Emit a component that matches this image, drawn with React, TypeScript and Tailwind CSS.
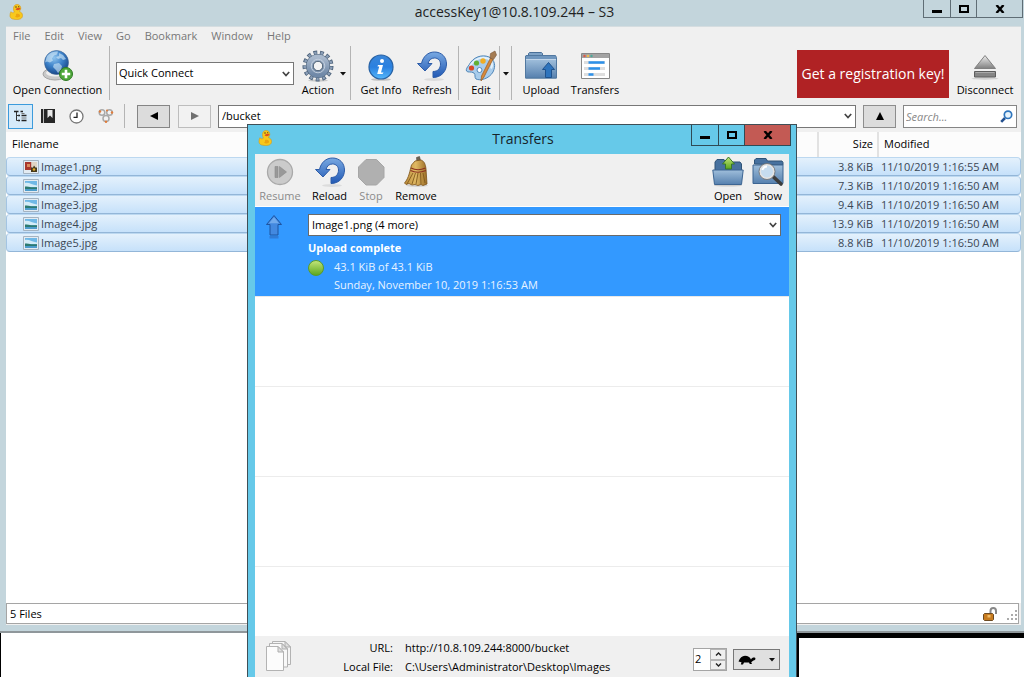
import React, { useState } from 'react';

interface RemoteFile {
  name: string;
  size: string;
  modified: string;
  kind: 'png' | 'jpg';
}

const files: RemoteFile[] = [
  { name: 'Image1.png', size: '3.8 KiB', modified: '11/10/2019 1:16:55 AM', kind: 'png' },
  { name: 'Image2.jpg', size: '7.3 KiB', modified: '11/10/2019 1:16:50 AM', kind: 'jpg' },
  { name: 'Image3.jpg', size: '9.4 KiB', modified: '11/10/2019 1:16:50 AM', kind: 'jpg' },
  { name: 'Image4.jpg', size: '13.9 KiB', modified: '11/10/2019 1:16:50 AM', kind: 'jpg' },
  { name: 'Image5.jpg', size: '8.8 KiB', modified: '11/10/2019 1:16:50 AM', kind: 'jpg' },
];

const menus = ['File', 'Edit', 'View', 'Go', 'Bookmark', 'Window', 'Help'];

/* ---------- icons ---------- */

function Gradients() {
  return (
    <svg width="0" height="0" className="absolute" aria-hidden="true">
      <defs>
        <radialGradient id="globe" cx="0.4" cy="0.3" r="0.75">
          <stop offset="0" stopColor="#8fc4ee" />
          <stop offset="0.5" stopColor="#3b80c8" />
          <stop offset="1" stopColor="#143f80" />
        </radialGradient>
        <linearGradient id="info" x1="0" y1="0" x2="0" y2="1">
          <stop offset="0" stopColor="#3b86d8" />
          <stop offset="0.5" stopColor="#2a80e0" />
          <stop offset="1" stopColor="#55b8fb" />
        </linearGradient>
        <linearGradient id="arrow" x1="0" y1="0" x2="0" y2="1">
          <stop offset="0" stopColor="#79a9e2" />
          <stop offset="1" stopColor="#2259b4" />
        </linearGradient>
        <linearGradient id="folder" x1="0" y1="0" x2="0" y2="1">
          <stop offset="0" stopColor="#9fbedb" />
          <stop offset="1" stopColor="#5680ae" />
        </linearGradient>
        <linearGradient id="gear" x1="0" y1="0" x2="0" y2="1">
          <stop offset="0" stopColor="#a9b9cd" />
          <stop offset="1" stopColor="#7089a8" />
        </linearGradient>
        <linearGradient id="metal" x1="0" y1="0" x2="0" y2="1">
          <stop offset="0" stopColor="#eeeeee" />
          <stop offset="1" stopColor="#808080" />
        </linearGradient>
        <linearGradient id="green" x1="0" y1="0" x2="0" y2="1">
          <stop offset="0" stopColor="#c4e67a" />
          <stop offset="1" stopColor="#5aa51c" />
        </linearGradient>
        <linearGradient id="straw" x1="0" y1="0" x2="1" y2="0">
          <stop offset="0" stopColor="#b98a3a" />
          <stop offset="0.5" stopColor="#e0b964" />
          <stop offset="1" stopColor="#9a6c26" />
        </linearGradient>
      </defs>
    </svg>
  );
}

function DuckIcon() {
  return (
    <svg width="16" height="16" viewBox="0 0 16 16" aria-hidden="true">
      <path d="M4.500 4.500C4.500 2 6 .5 8 .5c2.300 0 3.800 1.500 3.800 3.600 0 1.600-.8 2.600-1.800 3.300 2 .6 3.500 1.700 3.500 4.100 0 2.900-2.300 4-6 4-3.900 0-6.500-1-6.500-3.900 0-1.600.4-3 1-3.900.8 1.300 2 1.400 3.300.5-.5-1-.8-2.300-.8-3.700z" fill="#f8c81c" stroke="#d89a10" strokeWidth=".6" />
      <path d="M7 10c2.500-.8 4.300.2 4 2-.5 1.700-3.500 1.900-5 .7 1-.6 1.200-1.500 1-2.700z" fill="#eda50f" />
      <path d="M6.500 5.200c.8-1 2-1.700 4-1.500 1.200.3 1.200 1.300.2 1.900-1.200.7-3 .9-4.200-.4z" fill="#e0521c" />
      <circle cx="7" cy="3" r=".8" fill="#5b4413" />
      <circle cx="9.700" cy="2.700" r=".6" fill="#5b4413" />
    </svg>
  );
}

function ConnectIcon() {
  return (
    <svg width="32" height="32" viewBox="0 0 32 32" aria-hidden="true">
      <ellipse cx="13" cy="24" rx="12" ry="6" fill="#c9c9c9" stroke="#a4a4a4" />
      <ellipse cx="13" cy="23" rx="9" ry="3.500" fill="#efefef" />
      <circle cx="14.500" cy="12.500" r="12" fill="url(#globe)" stroke="#3c628f" strokeWidth=".6" />
      <path d="M5 6c3-4 8-5 11-4.500l-1 3-3 1-2 3 1 2-3 2-3-1-2 1zM17 3l4 2 3 4-3 1-2-2-3 1-2-2 3-1zM12 14l5-1 3 3-1 4-3 3-2-3-3-3z" fill="#d6ebf8" opacity=".6" />
      <circle cx="24" cy="24" r="6.500" fill="#4fa83a" stroke="#2d7a22" />
      <path d="M24 19.800v8.400M19.800 24h8.400" stroke="#fff" strokeWidth="2.600" />
    </svg>
  );
}

function GearIcon() {
  return (
    <svg width="32" height="32" viewBox="0 0 32 32" aria-hidden="true">
      <ellipse cx="16" cy="30.500" rx="10" ry="1.200" fill="#c9c9c9" />
      <circle cx="16" cy="16" r="13" fill="none" stroke="#4f647c" strokeWidth="5" strokeDasharray="3.600 2.681" />
      <circle cx="16" cy="16" r="12.800" fill="none" stroke="#8b9fb8" strokeWidth="3.600" strokeDasharray="2.200 3.984" strokeDashoffset="-.7" />
      <circle cx="16" cy="16" r="8.300" fill="none" stroke="#4f647c" strokeWidth="7.600" />
      <circle cx="16" cy="16" r="8.300" fill="none" stroke="url(#gear)" strokeWidth="6.400" />
      <circle cx="16" cy="16" r="6.800" fill="none" stroke="#c2cedd" strokeWidth="1" />
      <circle cx="16" cy="16" r="4.700" fill="#f3f3f3" stroke="#4f6378" strokeWidth="1" />
    </svg>
  );
}

function InfoIcon() {
  return (
    <svg width="32" height="32" viewBox="0 0 32 32" aria-hidden="true">
      <ellipse cx="16" cy="29.500" rx="10" ry="1.300" fill="#c2c2c2" />
      <circle cx="16" cy="17" r="12" fill="url(#info)" stroke="#2862a4" strokeWidth="1.200" />
      <circle cx="17" cy="11" r="2" fill="#fff" />
      <path d="M13 15h5l-2 7.500h2.500L17.500 24h-5.300l2-7.500H12.500z" fill="#fff" />
    </svg>
  );
}

function RefreshIcon() {
  return (
    <svg width="32" height="32" viewBox="0 0 32 32" aria-hidden="true">
      <ellipse cx="18" cy="29.500" rx="10" ry="1.500" fill="#dcdcdc" />
      <path d="M5.500 13.500C7 6.500 12 2 18.500 2 25.500 2 30.500 7 30.500 14S25.500 27.500 17 27.500v-6c5 0 7.500-3.200 7.500-7.500 0-3.500-2.500-6-6-6-3.500 0-5.500 2-6.500 5.500h4L9 21 1.500 13.500z" fill="url(#arrow)" stroke="#2d5ca8" strokeWidth="1" />
    </svg>
  );
}

function EditIcon() {
  return (
    <svg width="32" height="32" viewBox="0 0 32 32" aria-hidden="true">
      <path d="M4 15C8 7 17 4 24 7c6 3 7 9 4 15-4 7-13 9-17 7-2-2 0-4-2-6-3-2-6 0-7.500-2-.8-1.500.7-4 2.500-6z" fill="#a9cdec" stroke="#5287b8" />
      <path d="M5 16c4-7 11-9.500 18-7.500 4 2 5 6 3 10" fill="none" stroke="#e3f1fb" strokeWidth="2" />
      <circle cx="6.500" cy="18" r="2.600" fill="#d8482a" />
      <circle cx="11.500" cy="13" r="2.600" fill="#62b033" />
      <circle cx="18" cy="11" r="2.700" fill="#f0ad24" />
      <circle cx="14.500" cy="20" r="2.500" fill="#fff" stroke="#5287b8" />
      <path d="M25.500 8l2.300 1.500L19 27l-3 4 .5-5z" fill="#d88a3c" stroke="#985a1e" strokeWidth=".7" />
      <path d="M25 8l.5-4.500L30 1l1.500 4-3 4.500z" fill="#a47b52" stroke="#79573a" strokeWidth=".6" />
    </svg>
  );
}

function UploadFolderIcon() {
  return (
    <svg width="32" height="32" viewBox="0 0 32 32" aria-hidden="true">
      <path d="M3.500 7V3.500l1-1h12l1 1V7z" fill="#7fa3c7" stroke="#496f98" />
      <path d="M1 5.500h29.500l1 2v20.500H.5V6z" fill="#6f96be" stroke="#5178a0" />
      <path d="M.5 9.500h31v18.500H.5z" fill="url(#folder)" stroke="#5178a0" />
      <path d="M1 9.500h30" stroke="#c2d6ea" />
      <path d="M23.500 12.500l6 7h-3v8h-6v-8h-3z" fill="#2e74bd" stroke="#1f528d" />
    </svg>
  );
}

function TransfersIcon() {
  return (
    <svg width="32" height="32" viewBox="0 0 32 32" aria-hidden="true">
      <path d="M2.500 3.500h28v25h-28z" fill="#fff" stroke="#878787" />
      <path d="M3 4h27v4H3z" fill="#a3a3a3" />
      <circle cx="5.500" cy="6" r="1.200" fill="#df5946" />
      <circle cx="9" cy="6" r="1.200" fill="#eebb4c" />
      <circle cx="12.500" cy="6" r="1.200" fill="#4ca99a" />
      <path d="M5 12.500h3M5 18.500h3M5 24.500h3M8 12.500h18M8 18.500h18M8 24.500h18" stroke="#dedede" strokeWidth="3" />
      <path d="M9.500 12.500h16M9.500 18.500H21M9.500 24.500h5" stroke="#2d91ea" strokeWidth="2.600" />
    </svg>
  );
}

function EjectIcon() {
  return (
    <svg width="32" height="32" viewBox="0 0 32 32" aria-hidden="true">
      <ellipse cx="16" cy="28.500" rx="13.500" ry="1.200" fill="#d0d0d0" />
      <path d="M16 5.500l10.500 13h-21z" fill="url(#metal)" stroke="#808080" />
      <path d="M5.500 21.500h21v5.500h-21z" fill="#858585" stroke="#5c5c5c" />
      <path d="M6.500 22.500h19" stroke="#aaa" />
    </svg>
  );
}

function ResumeIcon() {
  return (
    <svg width="32" height="32" viewBox="0 0 32 32" aria-hidden="true">
      <circle cx="16" cy="16" r="12.500" fill="#cbcbcb" stroke="#a9a9a9" strokeWidth="1.300" />
      <path d="M11 10.500h3v11h-3zM15.500 10.500l7 5.500-7 5.500z" fill="#999" stroke="#8a8a8a" strokeWidth=".6" />
    </svg>
  );
}

function StopIcon() {
  return (
    <svg width="32" height="32" viewBox="0 0 32 32" aria-hidden="true">
      <path d="M11 3.500h10.500l7.500 7.500v10.500L21.500 29H11l-7.500-7.500V11z" fill="#b0b0b0" stroke="#a6a6a6" />
    </svg>
  );
}

function BroomIcon() {
  return (
    <svg width="32" height="32" viewBox="0 0 32 32" aria-hidden="true">
      <ellipse cx="17" cy="29.500" rx="11" ry="1.500" fill="#d2d2d2" />
      <path d="M16.500 1.500l3-1 1.500 6h-4z" fill="#6f6455" stroke="#4d4338" strokeWidth=".6" />
      <path d="M15 5l6-1c3 1 4.500 4 5 9l1 15-4 1.500-2-1-3 1-3-1-3 .5-3-1.500-3 1-1.500-1.500C9 22 10 14 11.500 9z" fill="url(#straw)" stroke="#7c5218" strokeWidth=".8" />
      <path d="M11 12c4 2 10 2 14.500 0M10.500 14.500c4 2 10.500 2 15.500 0" fill="none" stroke="#8a2f20" strokeWidth="1.100" />
      <path d="M13 17L7 28M15.500 17L12 28M18 17l-2 11M20.500 17l.5 11M23 17l2 10" stroke="#815a1d" strokeWidth=".9" />
    </svg>
  );
}

function OpenFolderIcon() {
  return (
    <svg width="32" height="32" viewBox="0 0 32 32" aria-hidden="true">
      <ellipse cx="16" cy="29.500" rx="14" ry="1" fill="#ccc" />
      <path d="M3 15V6l2-2.500h7L13.500 6H28l1.500 2v7z" fill="#47719f" stroke="#2f5377" />
      <path d="M.8 14h30.400l-1.700 14.500h-27z" fill="url(#folder)" stroke="#3d6592" />
      <path d="M16.500 1l6 7h-3v5h-6V8h-3z" fill="url(#green)" stroke="#37772a" />
    </svg>
  );
}

function ShowFolderIcon() {
  return (
    <svg width="32" height="32" viewBox="0 0 32 32" aria-hidden="true">
      <path d="M2.500 8V4l1.500-1.500h10L15.500 5H30l1 1.500V9z" fill="#47719f" stroke="#2f5377" />
      <path d="M1 9h30v18.500H1z" fill="url(#folder)" stroke="#3d6592" />
      <path d="M20.500 20l8.500 8" stroke="#3c3c3c" strokeWidth="3.600" strokeLinecap="round" />
      <circle cx="15" cy="15.500" r="7" fill="#c6dcef" stroke="#e4e4e4" strokeWidth="2" />
      <circle cx="15" cy="15.500" r="8" fill="none" stroke="#6b6b6b" strokeWidth=".8" />
      <path d="M10.500 14c.5-2 2.500-3.500 4.500-3.500" fill="none" stroke="#fff" strokeWidth="1.800" />
    </svg>
  );
}

function UpArrowIcon() {
  return (
    <svg width="18" height="26" viewBox="0 0 18 26" aria-hidden="true">
      <path d="M9 1.500l7.500 9H13V21H5V10.500H1.500z" fill="#4389e0" stroke="#1e54a0" />
      <path d="M9 3.300l5 6H4z" fill="#8fbff5" opacity=".6" />
      <path d="M4.500 22h9v2.500h-9z" fill="#2f6fc4" opacity=".7" />
    </svg>
  );
}

function PagesIcon() {
  return (
    <svg width="28" height="32" viewBox="0 0 28 32" aria-hidden="true">
      <path d="M7.500 1.500H20l5.500 5.500v17.500h-18z" fill="#f5f5f5" stroke="#b3b3b3" />
      <path d="M4.500 3.500H17l5.500 5.500v18h-18z" fill="#f8f8f8" stroke="#b3b3b3" />
      <path d="M1.500 6.500H13l5.500 5.500v18.500h-17z" fill="#fcfcfc" stroke="#b3b3b3" />
      <path d="M13 6.500V12h5.500zM17 3.500v5.500h5.500zM20 1.500V7h5.500z" fill="#e0e0e0" stroke="#adadad" />
    </svg>
  );
}

function FileIcon({ kind }: { kind: RemoteFile['kind'] }) {
  return (
    <svg width="16" height="14" viewBox="0 0 16 14" aria-hidden="true" className="shrink-0">
      <path d="M.5.5h15v13H.5z" fill="#e3ebf2" stroke="#a4b3c1" />
      {kind === 'png' ? (
        <>
          <path d="M2 2h6.500v8H2z" fill="#a8372c" />
          <path d="M8.500 2H14v5H8.500z" fill="#e0d4c4" />
          <path d="M4 4h3v3H4z" fill="#db8a5c" />
          <path d="M8 7.500h2l1-2 1.500 2H14V12H8z" fill="#45391b" />
          <circle cx="11" cy="9.500" r="1.300" fill="#e3ab2d" />
        </>
      ) : (
        <>
          <path d="M2 2h12v10H2z" fill="#6fb8e6" />
          <path d="M2 4c4-1 7 2 12 2.500v1.500H2z" fill="#d3ecf8" />
          <path d="M2 7.500c3-.5 5 1 12 .8V10H2z" fill="#2d7a70" />
          <path d="M2 10h12v2H2z" fill="#4d9ccc" />
        </>
      )}
    </svg>
  );
}

function Chevron() {
  return (
    <svg width="8" height="6" viewBox="0 0 8 6" aria-hidden="true" className="pointer-events-none absolute right-1 top-1/2 -translate-y-1/2">
      <path d="M.8 1L4 4.500 7.200 1" fill="none" stroke="#444" strokeWidth="1.700" />
    </svg>
  );
}

function Caret() {
  return (
    <svg width="6" height="4" viewBox="0 0 6 4" aria-hidden="true">
      <path d="M0 0h6L3 3.500z" fill="#111" />
    </svg>
  );
}

/* ---------- shared controls ---------- */

interface ToolProps {
  label: string;
  icon: React.ReactNode;
  className: string;
  disabled?: boolean;
}

function Tool({ label, icon, className, disabled }: ToolProps) {
  return (
    <button
      disabled={disabled}
      className={`flex shrink-0 flex-col items-center whitespace-nowrap leading-4 text-black disabled:text-[#8b8b8b] ${className}`}
    >
      {icon}
      <span>{label}</span>
    </button>
  );
}

function Separator({ className }: { className: string }) {
  return <div className={`w-px shrink-0 self-stretch bg-[#b4b4b4] ${className}`} />;
}

function WindowButtons({ dialog }: { dialog?: boolean }) {
  const size = dialog ? 'h-[21px]' : 'h-[18px]';
  const border = dialog ? 'border-[#2f4a55]' : 'border-[#5f6d75]';
  return (
    <div className={`flex justify-self-end border border-t-0 ${size} ${border}`}>
      <button aria-label="Minimize" className={`flex w-[27px] items-center justify-center border-r ${border}`}>
        <svg width="10" height="8" viewBox="0 0 10 8"><path d="M0 5h10v3H0z" /></svg>
      </button>
      <button aria-label="Maximize" className={`flex w-[26px] items-center justify-center border-r ${border}`}>
        <svg width="10" height="8" viewBox="0 0 10 8"><path d="M1 1h8v6H1z" fill="none" stroke="#000" strokeWidth="2" /></svg>
      </button>
      <button aria-label="Close" className={`flex w-[45px] items-center justify-center ${dialog ? 'bg-[#c35a54]' : ''}`}>
        <svg width="10" height="8" viewBox="0 0 10 8"><path d="M1.500 0L8.500 8M8.500 0L1.500 8" stroke="#000" strokeWidth="2.400" /></svg>
      </button>
    </div>
  );
}

/* ---------- browser window ---------- */

function BrowserWindow() {
  return (
    <section className="flex h-[calc(100vh-44px)] flex-col border-b-2 border-[#8f979b] bg-[#c3d5dc] pb-1.5 pl-1.5 pr-[3px]">
      <header className="-mr-0.5 grid h-[26px] shrink-0 grid-cols-[1fr_auto_1fr]">
        <div className="flex items-center pb-0.5 pl-[3px]">
          <DuckIcon />
        </div>
        <h1 className="text-sm leading-6 text-[#222]">accessKey1@10.8.109.244 – S3</h1>
        <WindowButtons />
      </header>

      <div className="flex min-h-0 flex-1 flex-col border-t border-[#d5dde0] bg-[#f0f0f0]">
        <nav className="flex h-[19px] items-center gap-3.5 pl-[7px] text-[#777]">
          {menus.map((menu) => (
            <button key={menu}>{menu}</button>
          ))}
        </nav>

        <div className="flex h-[54px] shrink-0 items-start pl-1 pr-1 pt-1">
          <Tool label="Open Connection" icon={<ConnectIcon />} className="w-[95px]" />
          <Separator className="-mt-1 ml-1" />
          <div className="relative ml-1.5 mt-3 w-[178px]">
            <select aria-label="Quick Connect" className="block h-[23px] w-full appearance-none border border-[#777] bg-white pl-0.5 pr-4">
              <option>Quick Connect</option>
            </select>
            <Chevron />
          </div>
          <Tool label="Action" icon={<GearIcon />} className="ml-0.5 w-11" />
          <button aria-label="Action menu" className="flex h-12 w-1.5 items-center justify-center">
            <Caret />
          </button>
          <Separator className="-mt-1 ml-1" />
          <Tool label="Get Info" icon={<InfoIcon />} className="ml-[5px] w-[50px]" />
          <Tool label="Refresh" icon={<RefreshIcon />} className="w-[52px]" />
          <Separator className="-mt-1" />
          <Tool label="Edit" icon={<EditIcon />} className="ml-1 w-9" />
          <Separator className="-mt-1" />
          <button aria-label="Edit with" className="flex h-12 w-[11px] items-center justify-center">
            <Caret />
          </button>
          <Separator className="-mt-1" />
          <Tool label="Upload" icon={<UploadFolderIcon />} className="ml-1 w-[50px]" />
          <Tool label="Transfers" icon={<TransfersIcon />} className="w-[58px]" />
          <button className="ml-auto h-12 w-[152px] shrink-0 whitespace-nowrap bg-[#b02224] text-sm text-white">
            Get a registration key!
          </button>
          <Tool label="Disconnect" icon={<EjectIcon />} className="ml-1 w-16" />
        </div>

        <div className="flex h-8 shrink-0 items-center pl-0.5 pr-1">
          <button aria-label="Outline" className="flex size-[25px] items-center justify-center border border-[#3c9bdc] bg-[#d6eaf9]">
            <svg width="14" height="12" viewBox="0 0 14 12">
              <path d="M0 1.500h4.500M4 5.500h2M4 10.500h2M6.500 1.500H9M7.500 5.500h5M7.500 10.500h5" stroke="#222" strokeWidth="1.600" />
              <path d="M7.500 3.500h3M7.500 8h5" stroke="#777" />
              <path d="M2.500 2v8.500H5M2.500 5.500H5" fill="none" stroke="#333" />
            </svg>
          </button>
          <button aria-label="Bookmarks" className="flex w-[29px] items-center justify-center">
            <svg width="14" height="14" viewBox="0 0 14 14">
              <path d="M0 0h14v14H0z" fill="#262626" />
              <path d="M2 0h1v14H2z" fill="#bbb" />
              <path d="M6.500 1h5v8L9 6.500 6.500 9z" fill="#e9e9e9" />
            </svg>
          </button>
          <button aria-label="History" className="flex w-[29px] items-center justify-center">
            <svg width="15" height="15" viewBox="0 0 15 15">
              <circle cx="7.500" cy="7.500" r="6.500" fill="#fff" stroke="#777" strokeWidth="1.300" />
              <path d="M8 3.500v4.800H4.500" fill="none" stroke="#222" strokeWidth="1.300" />
            </svg>
          </button>
          <button aria-label="Bonjour" className="flex w-[29px] items-center justify-center">
            <svg width="16" height="16" viewBox="0 0 16 16">
              <g fill="#f3f3f3" stroke="#a9a9a9" strokeWidth="1.500">
                <circle cx="4" cy="4.500" r="2.800" />
                <circle cx="11.500" cy="4.500" r="2.800" />
                <circle cx="8" cy="10.500" r="3" />
              </g>
              <circle cx="2" cy="3.500" r="1.200" fill="#e07b39" />
              <circle cx="14" cy="4.500" r="1.200" fill="#e07b39" />
              <circle cx="8" cy="13.800" r="1.200" fill="#e07b39" />
              <circle cx="9" cy="2.500" r="1" fill="#e07b39" />
            </svg>
          </button>
          <Separator className="my-1 ml-1" />
          <button aria-label="Back" className="ml-3 flex h-[23px] w-[33px] items-center justify-center border border-[#858585] bg-[#dcdcdc]">
            <svg width="8" height="8" viewBox="0 0 8 8"><path d="M8 0v8L0 4z" /></svg>
          </button>
          <button aria-label="Forward" className="ml-2 flex h-[23px] w-[33px] items-center justify-center border border-[#bdbdbd] bg-[#f2f2f2]">
            <svg width="8" height="8" viewBox="0 0 8 8"><path d="M0 0v8l8-4z" fill="#707070" /></svg>
          </button>
          <div className="relative ml-[7px] flex-1">
            <select aria-label="Path" className="block h-[23px] w-full appearance-none border border-[#777] bg-white pl-[3px]">
              <option>/bucket</option>
            </select>
            <Chevron />
          </div>
          <button aria-label="Parent folder" className="ml-[7px] flex h-[23px] w-[33px] items-center justify-center border border-[#8d8d8d] bg-[#dcdcdc]">
            <svg width="8" height="8" viewBox="0 0 8 8"><path d="M4 0l4 8H0z" /></svg>
          </button>
          <div className="relative ml-[7px] w-[114px]">
            <input
              type="search"
              aria-label="Search"
              placeholder="Search..."
              className="block h-[23px] w-full border border-[#858585] bg-white pl-0.5 pr-5 placeholder:italic placeholder:text-[#888]"
            />
            <svg width="13" height="13" viewBox="0 0 13 13" className="pointer-events-none absolute right-1 top-[5px]">
              <path d="M1.200 11.800L5 8" stroke="#24508f" strokeWidth="2.600" />
              <circle cx="8" cy="4.800" r="3.700" fill="#e6f3fc" stroke="#2e75bd" strokeWidth="1.700" />
            </svg>
          </div>
        </div>

        <div className="min-h-0 flex-1 bg-white">
          <table className="w-full table-fixed border-separate border-spacing-0">
            <thead>
              <tr className="h-[25px] bg-[#fcfcfc] text-left">
                <th className="border-r-2 border-[#e2e2e2] pl-1.5 font-normal">Filename</th>
                <th className="w-[60px] border-r-2 border-[#e2e2e2] pr-1 text-right font-normal">Size</th>
                <th className="w-[142px] pl-[5px] font-normal">Modified</th>
              </tr>
            </thead>
            <tbody className="text-[#3a4654]">
              {files.map((file) => (
                <tr key={file.name}>
                  <td className="rounded-l-sm border-y border-l border-t-[#bcd8f0] border-b-[#93b6d8] border-l-[#a3c4e2] bg-linear-to-b from-[#e4f1fc] to-[#c6e1fa] p-0">
                    <div className="flex h-[17px] items-center gap-0.5 pl-4 leading-4">
                      <FileIcon kind={file.kind} />
                      <span>{file.name}</span>
                    </div>
                  </td>
                  <td className="border-y border-t-[#bcd8f0] border-b-[#93b6d8] bg-linear-to-b from-[#e4f1fc] to-[#c6e1fa] p-0 pr-1.5 text-right leading-4">{file.size}</td>
                  <td className="rounded-r-sm border-y border-r border-t-[#bcd8f0] border-b-[#93b6d8] border-r-[#a3c4e2] bg-linear-to-b from-[#e4f1fc] to-[#c6e1fa] p-0 pl-0.5 leading-4">{file.modified}</td>
                </tr>
              ))}
            </tbody>
          </table>
        </div>

        <footer className="mb-px mr-0.5 flex h-[21px] shrink-0 items-center justify-between border border-[#a5a5a5] bg-white pl-[3px]">
          <span className="pt-0.5">5 Files</span>
          <div className="flex items-end gap-2">
            <svg width="15" height="14" viewBox="0 0 15 14" aria-hidden="true">
              <path d="M7.500 7V4c0-4 5.500-4 5.500 0v3" fill="none" stroke="#888" strokeWidth="2" />
              <path d="M1.500 6.500h8l1 1v5l-1 1h-8l-1-1v-5z" fill="#c77c20" stroke="#6d4a22" />
              <path d="M4.500 8h3v2.500h-3z" fill="#f3bd68" />
            </svg>
            <svg width="12" height="11" viewBox="0 0 12 11" aria-hidden="true">
              <path d="M9 0h2v2H9zM5 4h2v2H5zM9 4h2v2H9zM1 8h2v2H1zM5 8h2v2H5zM9 8h2v2H9z" fill="#aaa" />
            </svg>
          </div>
        </footer>
      </div>
    </section>
  );
}

/* ---------- transfers dialog ---------- */

function TransfersDialog() {
  const [connections, setConnections] = useState(2);

  return (
    <section
      role="dialog"
      aria-labelledby="transfers-title"
      className="absolute bottom-0 left-[247px] top-[124px] flex w-[550px] flex-col border border-b-0 border-[#3f4f57] bg-[#66c9e9] px-[7px]"
    >
      <header className="-mr-0.5 grid h-[29px] shrink-0 grid-cols-[1fr_auto_1fr]">
        <div className="flex items-center pb-1 pl-[3px]">
          <DuckIcon />
        </div>
        <h2 id="transfers-title" className="text-sm leading-7 text-[#16242b]">Transfers</h2>
        <WindowButtons dialog />
      </header>

      <div className="flex h-[53px] shrink-0 items-start border-b border-white bg-[#f0f0f0] pt-0.5">
        <Tool label="Resume" icon={<ResumeIcon />} className="w-[50px]" disabled />
        <Tool label="Reload" icon={<RefreshIcon />} className="w-[49px]" />
        <Tool label="Stop" icon={<StopIcon />} className="w-[34px]" disabled />
        <Tool label="Remove" icon={<BroomIcon />} className="w-14" />
        <Tool label="Open" icon={<OpenFolderIcon />} className="ml-auto w-10" />
        <Tool label="Show" icon={<ShowFolderIcon />} className="mr-px w-10" />
      </div>

      <ul className="min-h-0 flex-1 overflow-hidden bg-white">
        <li className="flex h-[90px] border-b border-[#e8e8e8] bg-[#3399ff] pl-2.5 pr-2 pt-[7px] text-[#e8f3ff]">
          <UpArrowIcon />
          <div className="ml-[25px] flex-1">
            <div className="relative text-black">
              <select aria-label="Transfer items" className="block h-[22px] w-full appearance-none border border-[#6a6a6a] bg-white pl-[3px]">
                <option>Image1.png (4 more)</option>
              </select>
              <Chevron />
            </div>
            <p className="mt-1 font-bold leading-4 text-white">Upload complete</p>
            <div className="flex gap-2.5 pt-0.5 leading-[18px]">
              <svg width="16" height="16" viewBox="0 0 16 16" className="mt-0.5" aria-hidden="true">
                <circle cx="8" cy="8" r="7.500" fill="url(#green)" stroke="#5a9a2c" />
              </svg>
              <div>
                <p>43.1 KiB of 43.1 KiB</p>
                <p>Sunday, November 10, 2019 1:16:53 AM</p>
              </div>
            </div>
          </div>
        </li>
        <li className="h-[90px] border-b border-[#ececec]" />
        <li className="h-[90px] border-b border-[#ececec]" />
        <li className="h-[90px] border-b border-[#ececec]" />
      </ul>

      <footer className="flex h-[41px] shrink-0 items-start bg-[#f0f0f0] pl-2.5 pr-[9px]">
        <div className="mt-1">
          <PagesIcon />
        </div>
        <dl className="mt-0.5 grid flex-1 grid-cols-[100px_1fr] gap-x-3 leading-[19px]">
          <dt className="text-right">URL:</dt>
          <dd>http://10.8.109.244:8000/bucket</dd>
          <dt className="text-right">Local File:</dt>
          <dd>C:\Users\Administrator\Desktop\Images</dd>
        </dl>
        <div className="mt-3 flex h-[23px] w-[34px] border border-[#a5a5a5] bg-white">
          <input
            aria-label="Maximum connections"
            inputMode="numeric"
            value={connections}
            onChange={(e) => setConnections(Number(e.target.value) || 1)}
            className="h-[18px] w-4 bg-white pl-px"
          />
          <div className="flex flex-1 flex-col">
            <button
              aria-label="More connections"
              onClick={() => setConnections(connections + 1)}
              className="flex flex-1 items-center justify-center border border-[#b5b5b5] bg-[#efefef]"
            >
              <svg width="7" height="4" viewBox="0 0 7 4"><path d="M1 3.500L3.500 1 6 3.500" fill="none" stroke="#222" strokeWidth="1.400" /></svg>
            </button>
            <button
              aria-label="Fewer connections"
              onClick={() => setConnections(Math.max(1, connections - 1))}
              className="flex flex-1 items-center justify-center border border-[#b5b5b5] bg-[#efefef]"
            >
              <svg width="7" height="4" viewBox="0 0 7 4"><path d="M1 .5L3.500 3 6 .5" fill="none" stroke="#222" strokeWidth="1.400" /></svg>
            </button>
          </div>
        </div>
        <button aria-label="Bandwidth" aria-haspopup="menu" className="ml-1.5 mt-[13px] flex h-[21px] w-[47px] items-center justify-between border border-[#777] bg-[#e0e0e0] pl-1 pr-1">
          <svg width="18" height="10" viewBox="0 0 18 10">
            <path d="M.5 6.500C2 3 4 .8 7 .8c3 0 4.800 1.400 6 3.600.8-1.300 2-2 3.500-1.800 1 .2 1.300 1.500.6 2.200-1 .6-2.200.8-3 1.800l-.9.6.8 1.800h-2.200l-.8-1.500H6L5 9.500H2.800l.7-2.200z" />
          </svg>
          <Caret />
        </button>
      </footer>
    </section>
  );
}

export default function App() {
  return (
    <div className="relative flex h-screen flex-col overflow-hidden bg-black font-['Open_Sans','Noto_Sans',sans-serif] text-[11px] text-black">
      <Gradients />
      <BrowserWindow />
      <div className="flex flex-1 pl-px">
        <div className="w-64 bg-white" />
        <div className="ml-[542px] mt-[5px] flex-1 bg-white" />
      </div>
      <TransfersDialog />
    </div>
  );
}
